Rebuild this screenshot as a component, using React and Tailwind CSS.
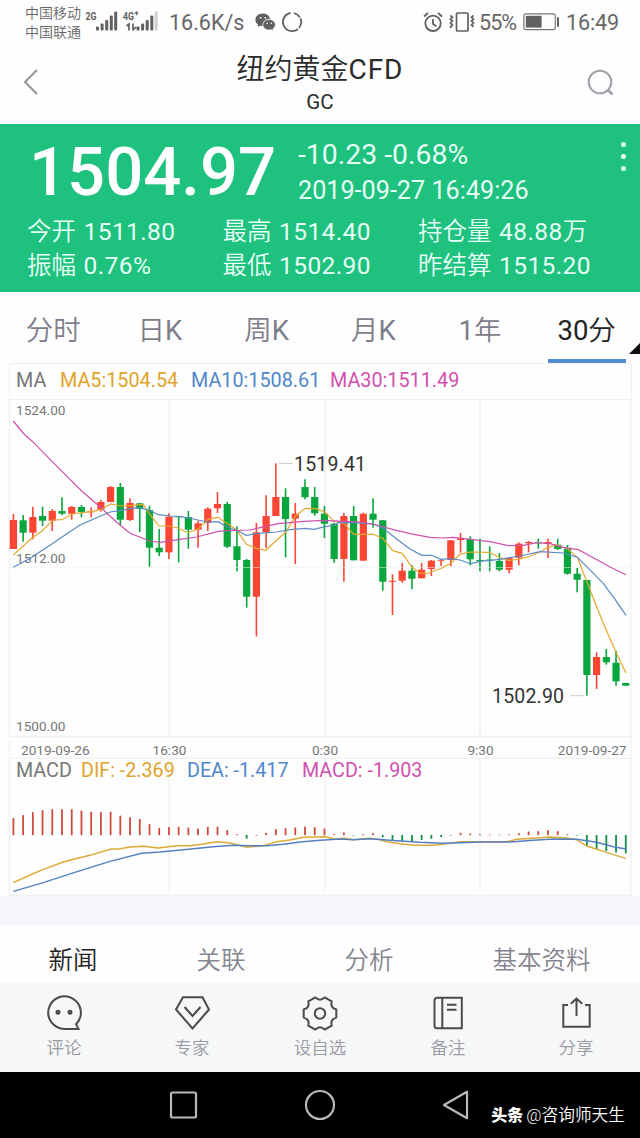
import React from 'react';

const RED = '#fb4634';
const GREEN = '#08a63c';
const STEP = 9.72;
const FIRST_X = 13.4;

// [isUp, high, bodyTop, bodyBottom, low] in chart pixels
const candles = [
    [1, 114, 120, 149, 149], [0, 115, 120.3, 132.7, 141.7], [1, 106.7, 117, 132.7, 139.3], [0, 106.7, 116, 120.7, 126],
    [1, 109, 111, 120.7, 131], [0, 97.3, 111, 113.7, 115], [1, 106, 107, 113.7, 119.7], [0, 105, 107, 112, 117.3],
    [1, 107.3, 111.5, 112.3, 117.3], [1, 99.7, 102, 109.7, 111.7], [1, 86, 87, 102, 102], [0, 83, 87, 119.7, 125.3],
    [1, 98.3, 103, 120, 121], [0, 103, 103.3, 109, 132], [0, 105.7, 110, 147.7, 166.7], [0, 129, 147.7, 152.3, 156],
    [1, 113.3, 116.7, 152.3, 159], [0, 116.5, 116.5, 117.3, 162.3], [0, 111, 117, 129.7, 148.7], [1, 120.7, 123.3, 129.7, 147.7],
    [1, 107.3, 108.7, 123, 131], [1, 92, 104, 108.3, 113], [0, 101.7, 104, 146.7, 148], [0, 126.3, 146.3, 160, 171.3],
    [0, 159, 160, 196.7, 207.7], [1, 123, 132.3, 196.7, 236.5], [1, 95.3, 116, 132.3, 148], [1, 63.3, 97, 116, 116],
    [0, 88.3, 97, 119, 157.3], [1, 103, 113.7, 118.7, 164], [0, 79.3, 87, 97.3, 99.3], [0, 87, 97, 113.3, 115.7],
    [0, 106, 113.7, 123.7, 138], [0, 122.7, 123.7, 159, 162.7], [1, 113, 116, 159, 181.7], [0, 106, 116, 160.3, 160.3],
    [1, 112.7, 113.7, 160.7, 160.7], [0, 98.3, 113.7, 119.7, 127.7], [0, 120, 120.3, 181.7, 190.7], [1, 174.3, 180.8, 181.8, 215],
    [1, 163, 170.7, 180.7, 182.7], [0, 165, 170.7, 178.7, 189.3], [1, 163, 169.7, 178.3, 178.3], [1, 160, 160.7, 169, 176],
    [1, 159.3, 160.3, 161.2, 166], [1, 140.3, 140.3, 160, 166.3], [1, 133, 138.5, 140, 152.7], [0, 136.3, 139, 159.3, 165.3],
    [0, 138.7, 160, 161, 171.3], [0, 146.3, 159.5, 160.4, 171.3], [0, 153, 161, 169.7, 171.3], [1, 157.7, 158, 169.7, 173.3],
    [1, 142.3, 143.7, 157.7, 165.3], [1, 141, 142, 143.3, 152.3], [0, 138.7, 142.3, 143.3, 148.7], [1, 138.7, 142, 143.3, 158],
    [0, 138.7, 144.7, 149, 150], [0, 145, 148.7, 173.7, 174.7], [0, 168, 173.7, 179.7, 192.3], [0, 180, 180, 275, 295.7],
    [1, 252.3, 257, 275, 289], [0, 249, 257, 262.3, 264.7], [0, 250.7, 262.7, 281.3, 285.7], [0, 283, 283, 285.7, 285.7],
];

// histogram values, positive above the zero line
const macd = [
    17, 20, 23, 25, 26, 26, 26, 24.5, 23.5, 23, 23.5, 19.5, 18, 16.3, 11, 7.3,
    8, 8.3, 7.6, 6.6, 8.3, 8.6, 5, 1, -3.6, -0.6, 2.3, 6, 7, 7.6, 8.6, 8,
    6.6, 1, 2.7, -0.6, 1, 2, -2.3, -5, -6, -6.7, -5, -3.7, -2, -0.6, 2.3, 1.7,
    1, 0.7, 0.6, 0.8, 2, 3.7, 4, 5, 4, 1, -0.6, -10.3, -14, -16, -17.7, -18.3,
];

const ma5 = '13.3,155 32,138 42,131 53,120 62,119.7 72,114 82,112.7 91.7,111.7 101,109.7 110.7,104 120.3,106 130,105.7 143,104.3 149,113.3 159,126 168.3,126 178,128 188,132.7 198,129 208,119.3 218,117.3 226.7,123.3 236.7,130 246.3,144 256,148.3 266,150.3 275.7,141 285.7,132 295.7,116 305.3,108.3 316,108.7 325,112.3 334,121.3 344,123.3 353.7,134.3 373.3,134.3 382.7,138.3 392.7,150.7 402.3,153.3 412,167.3 420,173 426.7,173.7 441.3,168.3 451,163.3 460,154.3 470,152 489.3,152.3 499.3,157.3 508.3,160.3 518.7,159.3 530,156.3 540,152 547.7,147.3 557.3,145 567.7,149 577.3,157.3 594,200 603.3,223.3 616,252.3 626,273';
const ma10 = '13.3,167.3 30,158.5 40,151.7 50,145.3 61.7,137.3 80,125 96.7,117.7 110,112 120,110.7 130,108.7 136.7,107.7 149,110 158.3,114.7 170,116 181.7,116.7 193.3,119 206.7,122 218.3,121.7 226.7,127 236.7,130.3 246.3,135.3 256,133.7 276.7,132 290,129.7 305,128.3 314,129.3 325,126.7 335,125.3 338.3,122.7 353.3,122.3 363.3,123.3 373.3,124 383.3,128.3 396.7,139 410,149 421.7,155.3 431.7,155.3 441,159.3 450,158.7 460,160 470.7,163.7 480,161.3 500,159.3 520,156 540,151.7 563.3,153 577.3,157.3 586.7,166.7 603.3,183.3 615,199.3 626,215.3';
const ma30 = '13.3,21 24,34 32.7,41.7 53.3,62.7 81.7,91 101.7,108.3 116.7,122.3 130,133.3 150,141 160,142.3 180,139.3 196.7,137 218.3,131.3 226.7,130.7 250,130 260,127.7 278.3,123.7 303.3,121.3 323.3,120.3 343.3,121.3 360,122 376.7,125 393.3,129.7 410,133.7 430,137.3 441.7,138 453,137.3 473.3,139.7 490,141.7 508.3,145.7 523.3,145.3 536.7,142.7 550,143.7 563.3,147.3 578.3,149.7 593.3,157.7 610,167 626,174.7';
const dif = '13.3,124.7 30,117 43.3,111.3 63.3,104 73.3,101.3 90,97.3 110,91.3 120,90.7 130,89 143.3,88.3 158.3,90 176.7,87.7 190,87.7 203.3,86 216.7,83.7 230,85 246.7,89.3 263.3,87.7 276.7,83.7 290,82 303.3,79.3 325,78.7 335,81 344,80.3 353.3,81.7 370,80.3 378.3,81.3 386.7,83.7 400,85.7 413.3,87.3 433.3,87.3 446.7,85.7 460,83.7 506.7,83.7 516.7,81.3 533.3,80.3 550,79 566.7,80 576.7,81.7 586.7,88 603.3,93.3 616.7,97.7 626,100.3';
const dea = '13.3,133.3 43.3,124.7 71.7,115.3 110,103.3 141.7,95.3 160,94 183.3,91.7 213.3,88.7 233.3,87.3 250,87.7 266.7,87.7 283.3,86.3 300,84 320,82.3 340,81 353.3,81.7 370,80.7 396.7,82.7 420,84.3 443.3,85.3 460,84.7 480,84 510,84 533.3,82.3 553.3,81 576.7,81.3 596.7,84.3 613.3,88.7 626,91';

const Cjk = ({ children }) => <span className="font-[350]">{children}</span>;

const SignalBars = ({ weakLast }) => (
    <g fill="#616161">
        <rect x="0" y="17" width="3" height="4" rx="1" />
        <rect x="4.6" y="14" width="3" height="7" rx="1" />
        <rect x="9.2" y="10.5" width="3" height="10.5" rx="1" />
        <rect x="13.8" y="6" width="3" height="15" rx="1" />
        <rect x="18.2" y="2" width="3" height="19" rx="1" fill={weakLast ? '#cfcfcf' : '#616161'} />
    </g>
);

const StatusBar = () => (
    <div className="flex h-[46px] shrink-0 items-center pl-[25px] pr-[21px] text-[#666]">
        <div className="w-[60px] pb-px text-[14px] leading-[19px] font-[350]">
            <p>中国移动</p>
            <p>中国联通</p>
        </div>
        <svg className="h-8 w-[76px]" viewBox="0 -4 76 32">
            <text x="0.5" y="8.500" fontSize="11.5" fontWeight="700" fill="#616161" textLength="11" lengthAdjust="spacingAndGlyphs">2G</text>
            <g transform="translate(11 -1.500)"><SignalBars /></g>
            <text x="38" y="8.500" fontSize="11.5" fontWeight="700" fill="#616161" textLength="11" lengthAdjust="spacingAndGlyphs">4G</text>
            <path d="M49.5 2.200h4M51.5 .2v4" stroke="#616161" strokeWidth="1.3" />
            <path d="M41.500 15l2.500-2v6.500M48 12.500v7M48 19l3-3" fill="none" stroke="#616161" strokeWidth="1.700" />
            <g transform="translate(51.5 -1.500)"><SignalBars weakLast /></g>
        </svg>
        <span className="ml-[8px] w-[78px] text-[21.500px] leading-6 whitespace-nowrap">16.6K/s</span>
        <svg className="mb-[2px] ml-[8px] h-[18px] w-[21px]" viewBox="0 0 21 18" fill="#616161">
            <path d="M8 .5C3.600 .5 .4 3.300 .4 6.800c0 2 1 3.700 2.700 4.900l-.7 2.300 2.600-1.300c1 .3 1.900.4 3 .4-.8-4.200 2.600-7.300 7.100-7.200C14.300 2.700 11.500 .5 8 .5z" />
            <path d="M14.200 6.500c-3.600 0-6.300 2.300-6.300 5.200s2.700 5.300 6.300 5.300c.8 0 1.500-.1 2.200-.3l2.100 1.100-.6-1.900c1.400-1 2.500-2.400 2.500-4.200 0-2.900-2.800-5.200-6.200-5.200z" stroke="#fff" strokeWidth=".7" />
            <circle cx="5.600" cy="4.800" r=".9" fill="#fff" /><circle cx="10.300" cy="4.800" r=".9" fill="#fff" />
            <circle cx="12.200" cy="10.200" r=".8" fill="#fff" /><circle cx="16.300" cy="10.200" r=".8" fill="#fff" />
        </svg>
        <svg className="mb-[2px] ml-[5px] h-[22px] w-[22px]" viewBox="0 0 22 22" fill="none" stroke="#666" strokeWidth="1.900">
            <path d="M13 2.100A9.100 9.100 0 0 1 18.800 6.300M19.400 7.400A9.100 9.100 0 0 1 18 17M17 17.900A9.100 9.100 0 1 1 9.500 2" />
        </svg>
        <div className="ml-auto flex items-center">
            <svg className="mb-[3px] h-[22px] w-5" viewBox="0 0 20 22" fill="none" stroke="#616161" strokeWidth="1.8">
                <circle cx="10" cy="12.300" r="7.700" />
                <path d="M1 5.500L5 2M19 5.500L15 2M10 8v4.800l3.200 2.400" />
            </svg>
            <svg className="mb-[3px] ml-[6px] h-5 w-[26px]" viewBox="0 0 26 20" fill="none" stroke="#616161" strokeWidth="1.700">
                <rect x="7.500" y="1" width="11.500" height="18" rx="1" />
                <path d="M1.500 3.500l2 1.800-2 1.900 2 1.900-2 1.900 2 1.900-2 1.900 1 1M24.500 3.500l-2 1.800 2 1.900-2 1.900 2 1.900-2 1.900 2 1.900" />
            </svg>
            <span className="ml-[4px] w-[39px] text-[21.500px] leading-6 tracking-[-0.9px]">55%</span>
            <svg className="mb-[2px] ml-[5px] h-[18px] w-[37px]" viewBox="0 0 37 18">
                <rect x=".8" y=".8" width="31.500" height="15.800" rx="2" fill="none" stroke="#777" strokeWidth="1.200" />
                <rect x="2.800" y="2.800" width="15.800" height="11.800" fill="#616161" />
                <rect x="34" y="4" width="2" height="10" rx="1" fill="#616161" />
            </svg>
            <span className="ml-[6px] w-[53px] text-[21.500px] leading-6 tracking-[-0.1px]">16:49</span>
        </div>
    </div>
);

const TitleBar = () => (
    <header className="flex h-[78px] shrink-0 items-start justify-between pr-[26px] pl-[23px]">
        <svg className="mt-[22px] h-7 w-[18px]" viewBox="0 0 18 28" fill="none" stroke="#999" strokeWidth="2.200">
            <path d="M14 2L2 14l12 12" />
        </svg>
        <div className="mr-[-13px] text-center text-[#2b2b2b]">
            <h1 className="pt-[3px] text-[28px] leading-[41px]"><Cjk>纽约黄金</Cjk><span className="tracking-[0.900px]">CFD</span></h1>
            <p className="text-[20.500px] leading-6">GC</p>
        </div>
        <svg className="mt-[22px] h-7 w-7" viewBox="0 0 28 28" fill="none" stroke="#a0a0aa" strokeWidth="2">
            <circle cx="14" cy="14" r="11.300" />
            <path d="M22 22l4.500 4.500" strokeWidth="2.600" />
        </svg>
    </header>
);

const stats = [
    ['今开', '1511.80'], ['最高', '1514.40'], ['持仓量', '48.88', '万'],
    ['振幅', '0.76%'], ['最低', '1502.90'], ['昨结算', '1515.20'],
];

const Quote = () => (
    <section className="flex h-[168px] shrink-0 flex-col bg-[#1ec17e] pl-[27px] text-[#e6fff6]">
        <div className="flex h-[91px]">
            <div className="w-[271px] pt-3 pl-[2px] text-[67px] leading-[72px] font-medium text-white">1504.97</div>
            <div className="pt-[13px] whitespace-nowrap">
                <p className="text-[28.400px] leading-9">-10.23 -0.68%</p>
                <p className="text-[25.200px] leading-9">2019-09-27 16:49:26</p>
            </div>
            <div className="mt-[18px] mr-[14px] ml-auto flex flex-col gap-[7px]">
                <i className="h-[5px] w-[5px] rounded-full bg-[#e6fff6]" />
                <i className="h-[5px] w-[5px] rounded-full bg-[#e6fff6]" />
                <i className="h-[5px] w-[5px] rounded-full bg-[#e6fff6]" />
            </div>
        </div>
        <div className="grid grid-cols-[195.500px_195.500px_1fr] text-[24.500px] leading-[34px] whitespace-nowrap">
            {stats.map(([label, value, unit]) => (
                <p key={label}><Cjk>{label}</Cjk> <span className="ml-[1.500px] tracking-[0.400px]">{value}</span>{unit && <Cjk>{unit}</Cjk>}</p>
            ))}
        </div>
    </section>
);

const PeriodTabs = () => (
    <nav className="relative grid h-[71px] shrink-0 grid-cols-6 text-center text-[27.500px] leading-[78px] text-[#7d7d8b]">
        <span><Cjk>分时</Cjk></span>
        <span><Cjk>日</Cjk>K</span>
        <span><Cjk>周</Cjk>K</span>
        <span><Cjk>月</Cjk>K</span>
        <span>1<Cjk>年</Cjk></span>
        <span className="text-[#222]">30<Cjk>分</Cjk></span>
        <i className="absolute right-[14px] bottom-0 h-[4px] w-[78.500px] bg-[#4f8ad2]" />
        <svg className="absolute right-0 bottom-[9px] h-[11px] w-[11px]" viewBox="0 0 11 11"><path d="M11 0v11H0z" fill="#111" /></svg>
    </nav>
);

const CandleChart = () => (
    <svg className="block h-[359px] w-full" viewBox="0 0 640 359">
        <g stroke="#f0f0f0" strokeWidth="1.300">
            <path d="M9.500 0V359M631 0V359M9 167.500H631M9 336.500H631M9 358.300H631M169 0V336M325 0V336M480 0V336" />
        </g>
        <g fill="#777" fontSize="13.600">
            <text x="16" y="14.500">1524.00</text>
            <text x="16" y="162.500">1512.00</text>
            <text x="16" y="331">1500.00</text>
            <text x="21" y="354.500">2019-09-26</text>
            <text x="169.500" y="354.500" textAnchor="middle">16:30</text>
            <text x="325" y="354.500" textAnchor="middle">0:30</text>
            <text x="480.500" y="354.500" textAnchor="middle">9:30</text>
            <text x="626.500" y="354.500" textAnchor="end">2019-09-27</text>
        </g>
        {candles.map(([up, high, top, bottom, low], i) => {
            const x = FIRST_X + i * STEP;
            return (
                <g key={i} fill={up ? RED : GREEN}>
                    <rect x={x - 0.8} y={high} width="1.6" height={low - high} />
                    <rect x={x - 3.6} y={top} width="7.200" height={bottom - top} />
                </g>
            );
        })}
        <path d="M9 167.500H631" stroke="#fff" strokeOpacity=".45" />
        <g fill="none" strokeWidth="1.200">
            <polyline points={ma5} stroke="#e3a92f" />
            <polyline points={ma10} stroke="#5a8bc4" />
            <polyline points={ma30} stroke="#cf52ad" />
        </g>
        <path d="M279 63.500h14M570 295.700h14" stroke="#ccc" />
        <g fill="#333" fontSize="19.500">
            <text x="294" y="70.500" textLength="72">1519.41</text>
            <text x="492" y="303" textLength="72">1502.90</text>
        </g>
    </svg>
);

const MacdChart = () => (
    <svg className="block h-[137px] w-full" viewBox="0 1 640 137">
        <path d="M9.500 0V138M631 0V138M9 137.500H631M169 0V133M325 0V133M480 0V133" stroke="#f0f0f0" strokeWidth="1.300" />
        <g fontSize="19.700">
            <text x="16" y="18.500" fill="#777">MACD</text>
            <text x="81" y="18.500" fill="#e0a32b">DIF: -2.369</text>
            <text x="187" y="18.500" fill="#4f86cc">DEA: -1.417</text>
            <text x="302" y="18.500" fill="#d24fae">MACD: -1.903</text>
        </g>
        {macd.map((v, i) => (
            <rect
                key={i}
                x={FIRST_X + i * STEP - 0.9}
                y={v > 0 ? 77.2 - v : 77}
                width="1.800"
                height={Math.abs(v)}
                fill={v > 0 ? '#cf4a3c' : '#0f8f45'}
            />
        ))}
        <polyline points={dif} fill="none" stroke="#dba936" strokeWidth="1.400" />
        <polyline points={dea} fill="none" stroke="#5580c0" strokeWidth="1.400" />
    </svg>
);

const Charts = () => (
    <section className="shrink-0">
        <div className="mr-[8.500px] ml-[9px] flex h-[37px] items-center border border-[#f0f0f0] pb-px pl-[6px] text-[19.800px] leading-none whitespace-nowrap">
            <span className="w-[44px] text-[#777]">MA</span>
            <span className="w-[131px] text-[#e0a32b]">MA5:1504.54</span>
            <span className="w-[139px] text-[#4f86cc]">MA10:1508.61</span>
            <span className="text-[#d24fae]">MA30:1511.49</span>
        </div>
        <CandleChart />
        <MacdChart />
    </section>
);

const icons = {
    comment: (
        <>
            <path d="M32.500 34.900H18.500A16.300 16.300 0 1 1 30 30.200z" />
            <circle cx="12" cy="18.200" r="1.500" fill="#4a4a4a" />
            <circle cx="24" cy="18.200" r="1.500" fill="#4a4a4a" />
        </>
    ),
    expert: <path d="M9 3.200h19.500L35 15.500 18.500 34.500 2 15.500zM10.500 13l8 9 8-9" />,
    settings: (
        <g transform="translate(18 19.500)">
            <path d="M16.300-4.100V4.100Q10 5.800 11.700 12.100L4.600 16.100Q0 11.500-4.600 16.100L-11.700 12.100Q-10 5.800-16.300 4.100V-4.100Q-10-5.800-11.700-12.100L-4.600-16.100Q0-11.500 4.600-16.100L11.700-12.100Q10-5.800 16.300-4.100z" strokeLinejoin="round" />
            <circle r="5.200" />
        </g>
    ),
    note: <path d="M7 3.800h24.800v30.500H7a2.500 2.500 0 0 1-2.500-2.500V6.300A2.500 2.500 0 0 1 7 3.800zM12.300 3.800v30.500M17 10.800h9.500M17 15.800h9.500" />,
    share: <path d="M10 11H5.300v21.700h26.400V11H27M18.500 22V4.800M12.800 9.800l5.700-5.300 5.700 5.300" />,
};

const actions = [
    ['comment', '评论'], ['expert', '专家'], ['settings', '设自选'], ['note', '备注'], ['share', '分享'],
];

const App = () => (
    <div className="relative flex h-[1138px] w-[640px] flex-col overflow-hidden bg-[#fefefe] font-['Roboto','Noto_Sans_CJK_SC',sans-serif]">
        <StatusBar />
        <TitleBar />
        <Quote />
        <PeriodTabs />
        <Charts />
        <div className="h-[29px] shrink-0 bg-[#f4f6fa]" />
        <nav className="flex h-[58px] shrink-0 justify-between pr-[49.500px] pl-[48.500px] text-[24.500px] leading-[72px] font-[350] text-[#85858f]">
            <span className="text-[#222]">新闻</span>
            <span>关联</span>
            <span>分析</span>
            <span>基本资料</span>
        </nav>
        <div className="grid h-[89px] shrink-0 grid-cols-5 bg-[#f6f8f8] pt-[11px]">
            {actions.map(([icon, label]) => (
                <div key={icon} className="flex flex-col items-center">
                    <svg className="h-[37px] w-[37px]" viewBox="0 0 37 37" fill="none" stroke="#4a4a4a" strokeWidth="2">{icons[icon]}</svg>
                    <span className="mt-[4px] text-[17.500px] leading-[26px] font-[350] text-[#9a9aa3]">{label}</span>
                </div>
            ))}
        </div>
        <footer className="flex flex-1 justify-center bg-black pt-[17px]">
            <svg className="h-8 w-[320px]" viewBox="0 0 320 32" fill="none" stroke="#b9b9b9" strokeWidth="2.200">
                <rect x="11" y="3.500" width="25" height="25" rx="1.500" />
                <circle cx="160" cy="16" r="14" />
                <path d="M307 2.800v26.400L284 16z" strokeLinejoin="round" />
            </svg>
        </footer>
        <div className="absolute right-[15px] bottom-[10px] flex items-center gap-[3px] text-[16.700px] leading-6 whitespace-nowrap text-white">
            <b className="text-[16px] font-black">头条</b>
            <span className="font-[350]">@咨询师天生</span>
        </div>
    </div>
);

export default App;
